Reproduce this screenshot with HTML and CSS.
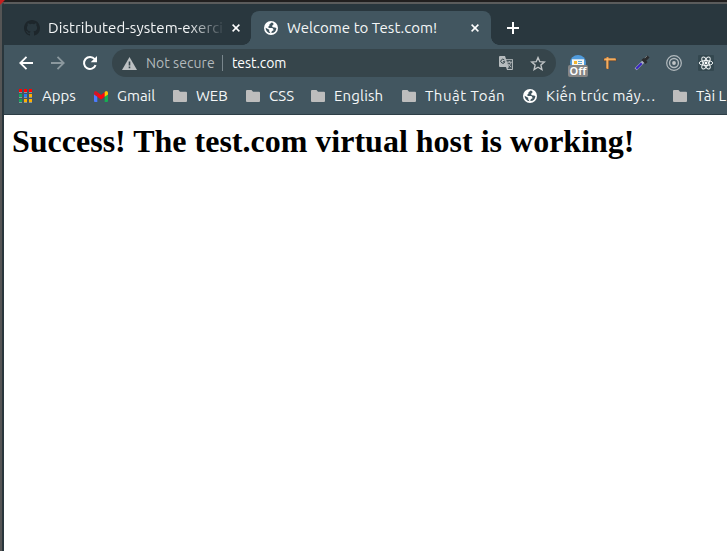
FILE: index.html
```html
<!DOCTYPE html>
<html lang="en">
<head>
<meta charset="utf-8">
<title>Welcome to Test.com!</title>
<link rel="stylesheet" href="styles.css">
</head>
<body>
<svg class="defs" width="0" height="0">
  <symbol id="folder" viewBox="0 0 14 12"><path d="M1 0h4.5L7 1.7h6a1 1 0 0 1 1 1V11a1 1 0 0 1-1 1H1a1 1 0 0 1-1-1V1a1 1 0 0 1 1-1z" fill="#bdbdbd"/></symbol>
  <symbol id="globe" viewBox="0 0 14 14"><circle cx="7" cy="7" r="7" fill="#fff"/><path d="M7.6 1.6 5.4 3.5v1.2L4.2 5.8l.5 1.2h3.7l1 1.2v1.3l-1.5.6-.6 2A5.4 5.4 0 0 0 12.4 7l-1.7-.4-1.8-.3-1-1.2 1.6-1.5-.3-1.6zM1.6 6.8l3.6 2v1.5l1.3 1.9A5.4 5.4 0 0 1 1.6 6.8z" fill="#3f545e"/></symbol>
  <symbol id="close" viewBox="0 0 8 8"><path d="m.6.6 6.8 6.8M7.4.6.6 7.4" stroke="#fff" stroke-width="1.5"/></symbol>
</svg>
<div class="window">
  <div class="tabs">
    <div class="tab first">
      <svg width="16" height="16" viewBox="0 0 16 16"><path fill="#1d262b" d="M8 0C3.58 0 0 3.58 0 8c0 3.54 2.29 6.53 5.47 7.59.4.07.55-.17.55-.38 0-.19-.01-.82-.01-1.49-2.01.37-2.53-.49-2.69-.94-.09-.23-.48-.94-.82-1.13-.28-.15-.68-.52-.01-.53.63-.01 1.08.58 1.23.82.72 1.21 1.87.87 2.33.66.07-.52.28-.87.51-1.07-1.78-.2-3.64-.89-3.64-3.95 0-.87.31-1.59.82-2.15-.08-.2-.36-1.02.08-2.12 0 0 .67-.21 2.2.82a7.6 7.6 0 0 1 4 0c1.53-1.04 2.2-.82 2.2-.82.44 1.1.16 1.92.08 2.12.51.56.82 1.27.82 2.15 0 3.07-1.87 3.75-3.65 3.95.29.25.54.73.54 1.48 0 1.07-.01 1.93-.01 2.2 0 .21.15.46.55.38A8 8 0 0 0 16 8c0-4.42-3.58-8-8-8z"/></svg>
      <span class="title faded">Distributed-system-exerci</span>
      <svg width="8" height="8"><use href="#close"/></svg>
    </div>
    <div class="tab active">
      <svg width="14" height="14"><use href="#globe"/></svg>
      <span class="title">Welcome to Test.com!</span>
      <svg width="8" height="8"><use href="#close"/></svg>
    </div>
    <svg class="plus" width="12" height="12" viewBox="0 0 12 12"><path d="M6 0v12M0 6h12" stroke="#fff" stroke-width="2"/></svg>
  </div>
  <div class="toolbar">
    <svg width="14" height="14" viewBox="0 0 14 14"><path d="M14 7H1.5M7.5.8 1.3 7l6.2 6.2" fill="none" stroke="#fff" stroke-width="1.8"/></svg>
    <svg width="14" height="14" viewBox="0 0 14 14"><path d="M0 7h12.5M6.5.8 12.7 7l-6.2 6.2" fill="none" stroke="#8b989e" stroke-width="1.8"/></svg>
    <svg class="reload" width="16" height="16" viewBox="0 0 16 16"><path d="M13.6 10.2A6 6 0 1 1 12.7 4.2L14 5.5" fill="none" stroke="#fff" stroke-width="2"/><path d="M15 1v6.3H8.7z" fill="#fff"/></svg>
    <div class="address">
      <svg width="15" height="13" viewBox="0 0 15 13"><path d="M7.5 0 15 13H0z" fill="#bdc1c3"/><path d="M7.5 4.5v4M7.5 9.5v1.8" stroke="#36454b" stroke-width="1.6"/></svg>
      <span class="insecure">Not secure</span>
      <span class="rule"></span>
      <span class="url">test.com</span>
      <svg class="translate" width="14" height="14" viewBox="0 0 14 14"><path d="M1 0h5l1 3h6a1 1 0 0 1 1 1v9a1 1 0 0 1-1 1H8l-1-3H1a1 1 0 0 1-1-1V1a1 1 0 0 1 1-1z" fill="#b7bcbe"/><path d="M7.2 3.8h5.9v9.3H8.5l1.3-2.2z" fill="#46545a"/><path d="M8 6.2h4.7M10.3 5v1.2M12 6.2c-.4 2-1.6 3-2.8 4M8.8 7.5l3.4 3.7" fill="none" stroke="#b7bcbe"/><path d="M5.4 4A2 2 0 1 0 5.8 5.7H4" fill="none" stroke="#36454b"/></svg>
      <svg width="16" height="15" viewBox="0 0 16 15"><path d="m8 1.6 1.8 4.1 4.5.4-3.4 3 1 4.4L8 11.2l-3.9 2.3 1-4.4-3.4-3 4.5-.4z" fill="none" stroke="#c0c4c6" stroke-width="1.4"/></svg>
    </div>
    <div class="extensions">
      <div class="proxy">
        <svg width="16" height="16" viewBox="0 0 16 16"><circle cx="8" cy="8" r="8" fill="#509bdc"/><path d="M2 4h12v10H2z" fill="#f6f6f3"/><path d="M2 4h12v1H2z" fill="#c5dced"/><path d="M4 6h3v3H4z" fill="#f2b52f"/><path d="M8 6h4v1H8zm0 2h4v1H8z" fill="#5aa3d5"/></svg>
        <span class="badge">Off</span>
      </div>
      <svg width="16" height="16" viewBox="0 0 16 16"><path d="M1.5 4.7h13M5.5 2v12" stroke="#5a4536" stroke-width="3.2"/><path d="M2 4.5h12M5.5 2v12" stroke="#ee9a45" stroke-width="2"/><path d="M3 4h10M5 4v9" stroke="#ffd08c" stroke-width=".7"/></svg>
      <svg width="16" height="16" viewBox="0 0 16 16"><path d="m1.7 14.3 8-8" stroke="#aab1c4" stroke-width="3"/><path d="m2.2 13.8 5.5-5.5" stroke="#3823c4" stroke-width="2"/><path d="m8.5 4 4 4M9.5 6.5l5-5" stroke="#2a2b2d" stroke-width="3"/><path d="m11 3 2-2" stroke="#757575"/></svg>
      <svg width="16" height="16" viewBox="0 0 17 17" fill="none" stroke="#b2babe"><circle cx="8.5" cy="8.5" r="7.8" stroke-width="1.3"/><circle cx="8.5" cy="8.5" r="4.7" stroke-width="1.5"/><circle cx="8.5" cy="8.5" r="2" fill="#c1c5c7" stroke="none"/></svg>
      <svg width="16" height="16" viewBox="0 0 16 16"><rect width="16" height="16" rx="1" fill="#344850"/><g fill="none" stroke="#f0f4f5"><ellipse cx="8" cy="8" rx="6.8" ry="2.5"/><ellipse cx="8" cy="8" rx="6.8" ry="2.5" transform="rotate(60 8 8)"/><ellipse cx="8" cy="8" rx="6.8" ry="2.5" transform="rotate(120 8 8)"/></g><circle cx="8" cy="8" r="1.4" fill="#fff"/></svg>
    </div>
  </div>
  <div class="bookmarks">
    <div class="bookmark apps"><svg width="14" height="14" viewBox="0 0 14 14"><path d="M0 0h3v3H0zm5 0h3v3H5zm5 0h3v3h-3z" fill="#f00"/><path d="M0 5h3v3H0zM0 10h3v3H0z" fill="#12a15c"/><path d="M5 5h3v3H5z" fill="#287cf0"/><path d="M10 5h3v3h-3zM5 10h3v3H5zm5 0h3v3h-3z" fill="#ffb000"/><path d="M0 3.5h3m2 0h3m2 0h3M0 8.5h3m2 0h3m2 0h3M0 13.5h3m2 0h3m2 0h3" stroke="#a8b2b7" stroke-width=".7"/></svg><span>Apps</span></div>
    <div class="bookmark gmail"><svg width="14" height="11" viewBox="0 0 14 11"><path d="M0 2v8a1 1 0 0 0 1 1h2.3V4z" fill="#4b7bff"/><path d="M14 2v8a1 1 0 0 1-1 1h-2.3V4z" fill="#16ae52"/><path d="M0 1.5v2l3.3 2.3V1L2 0Q0 0 0 1.5z" fill="#cf1628"/><path d="m3.3 1 3.7 3 3.7-3v4.7L7 8.4 3.3 5.7z" fill="#fb0610"/><path d="M14 1.5v2l-3.3 2.3V1L12 0q2 0 2 1.5z" fill="#ffc400"/></svg><span>Gmail</span></div>
    <div class="bookmark web"><svg width="14" height="12"><use href="#folder"/></svg><span>WEB</span></div>
    <div class="bookmark css"><svg width="14" height="12"><use href="#folder"/></svg><span>CSS</span></div>
    <div class="bookmark english"><svg width="14" height="12"><use href="#folder"/></svg><span>English</span></div>
    <div class="bookmark algo"><svg width="14" height="12"><use href="#folder"/></svg><span>Thuật Toán</span></div>
    <div class="bookmark arch"><svg width="14" height="14"><use href="#globe"/></svg><span>Kiến trúc máy…</span></div>
    <div class="bookmark docs"><svg width="14" height="12"><use href="#folder"/></svg><span>Tài L</span></div>
  </div>
  <main class="page"><h1>Success! The test.com virtual host is working!</h1></main>
</div>
</body>
</html>
```
FILE: styles.css
```css
* { box-sizing: border-box; }
body {
  margin: 0;
  width: 727px;
  height: 551px;
  overflow: hidden;
  background: linear-gradient(135deg, #c51f1f 3px, transparent 4px), linear-gradient(#211f1f 2px, #555 2px);
  font: 14px/20px Ubuntu, "Noto Sans", sans-serif;
  color: #f4f6f7;
}
svg { display: block; flex: none; }
.defs { position: absolute; }
.window {
  height: 549px;
  margin: 2px 0 0 2px;
  border-top: 2px solid #5b5c5c;
  border-left: 2px solid #29363c;
  border-top-left-radius: 4px;
  background: #29373e;
  overflow: hidden;
}
.tabs {
  height: 41px;
  display: flex;
  align-items: flex-end;
  background: #29373e;
  font-size: 15px;
}
.tab {
  height: 34px;
  display: flex;
  align-items: center;
  white-space: nowrap;
}
.first { width: 247px; padding-left: 20px; gap: 8px; }
.faded {
  width: 175px;
  overflow: hidden;
  margin-right: 1px;
  letter-spacing: .1px;
  -webkit-mask-image: linear-gradient(90deg, #000 140px, transparent 178px);
  mask-image: linear-gradient(90deg, #000 140px, transparent 178px);
}
.active {
  position: relative;
  width: 240px;
  padding: 0 12px 0 13px;
  gap: 9px;
  border-radius: 8px 8px 0 0;
  background: #425660;
}
.active .title { flex: 1; letter-spacing: .05px; }
.active::before, .active::after {
  content: "";
  position: absolute;
  bottom: 0;
  width: 8px;
  height: 8px;
}
.active::before { left: -8px; background: radial-gradient(circle at 0 0, transparent 7.5px, #425660 8px); }
.active::after { right: -8px; background: radial-gradient(circle at 100% 0, transparent 7.5px, #425660 8px); }
.plus { margin: 0 0 11px 16px; }
.toolbar {
  height: 36px;
  padding-left: 15px;
  display: flex;
  align-items: center;
  gap: 18px;
  background: #425660;
}
.reload { margin: 0 1px 0 -1px; }
.address {
  width: 444px;
  height: 28px;
  margin-left: -5px;
  padding: 0 10px;
  display: flex;
  align-items: center;
  border-radius: 14px;
  background: #36454b;
}
.insecure { width: 76px; margin-left: 9px; color: #b3b9bc; letter-spacing: .05px; }
.rule { width: 1px; height: 16px; background: #79868c; }
.url { flex: 1; margin-left: 9px; color: #fff; letter-spacing: -.1px; }
.translate { margin-right: 17px; }
.extensions { display: flex; align-items: center; gap: 16px; margin-left: -4px; }
.proxy { position: relative; }
.badge {
  position: absolute;
  left: -2px;
  top: 10px;
  width: 20px;
  height: 12px;
  border-radius: 2px;
  background: #858585;
  color: #fff;
  font: 600 11px/12px "Noto Sans", sans-serif;
  text-align: center;
}
.bookmarks {
  height: 34px;
  padding: 0 0 3px 15px;
  display: grid;
  grid-template-columns: 75px 79px 73px 65px 91px 121px 150px 100px;
  align-items: center;
  background: #425660;
  border-bottom: 1px solid #2d3e46;
  font-size: 15px;
}
.bookmark { display: flex; align-items: center; gap: 9px; white-space: nowrap; }
.english { letter-spacing: .15px; }
.algo { letter-spacing: .5px; }
.arch { letter-spacing: .25px; }
.page { height: 436px; background: #fff; color: #000; overflow: hidden; }
h1 { margin: 8px; font: bold 32px/37px "Liberation Serif", serif; }
```
